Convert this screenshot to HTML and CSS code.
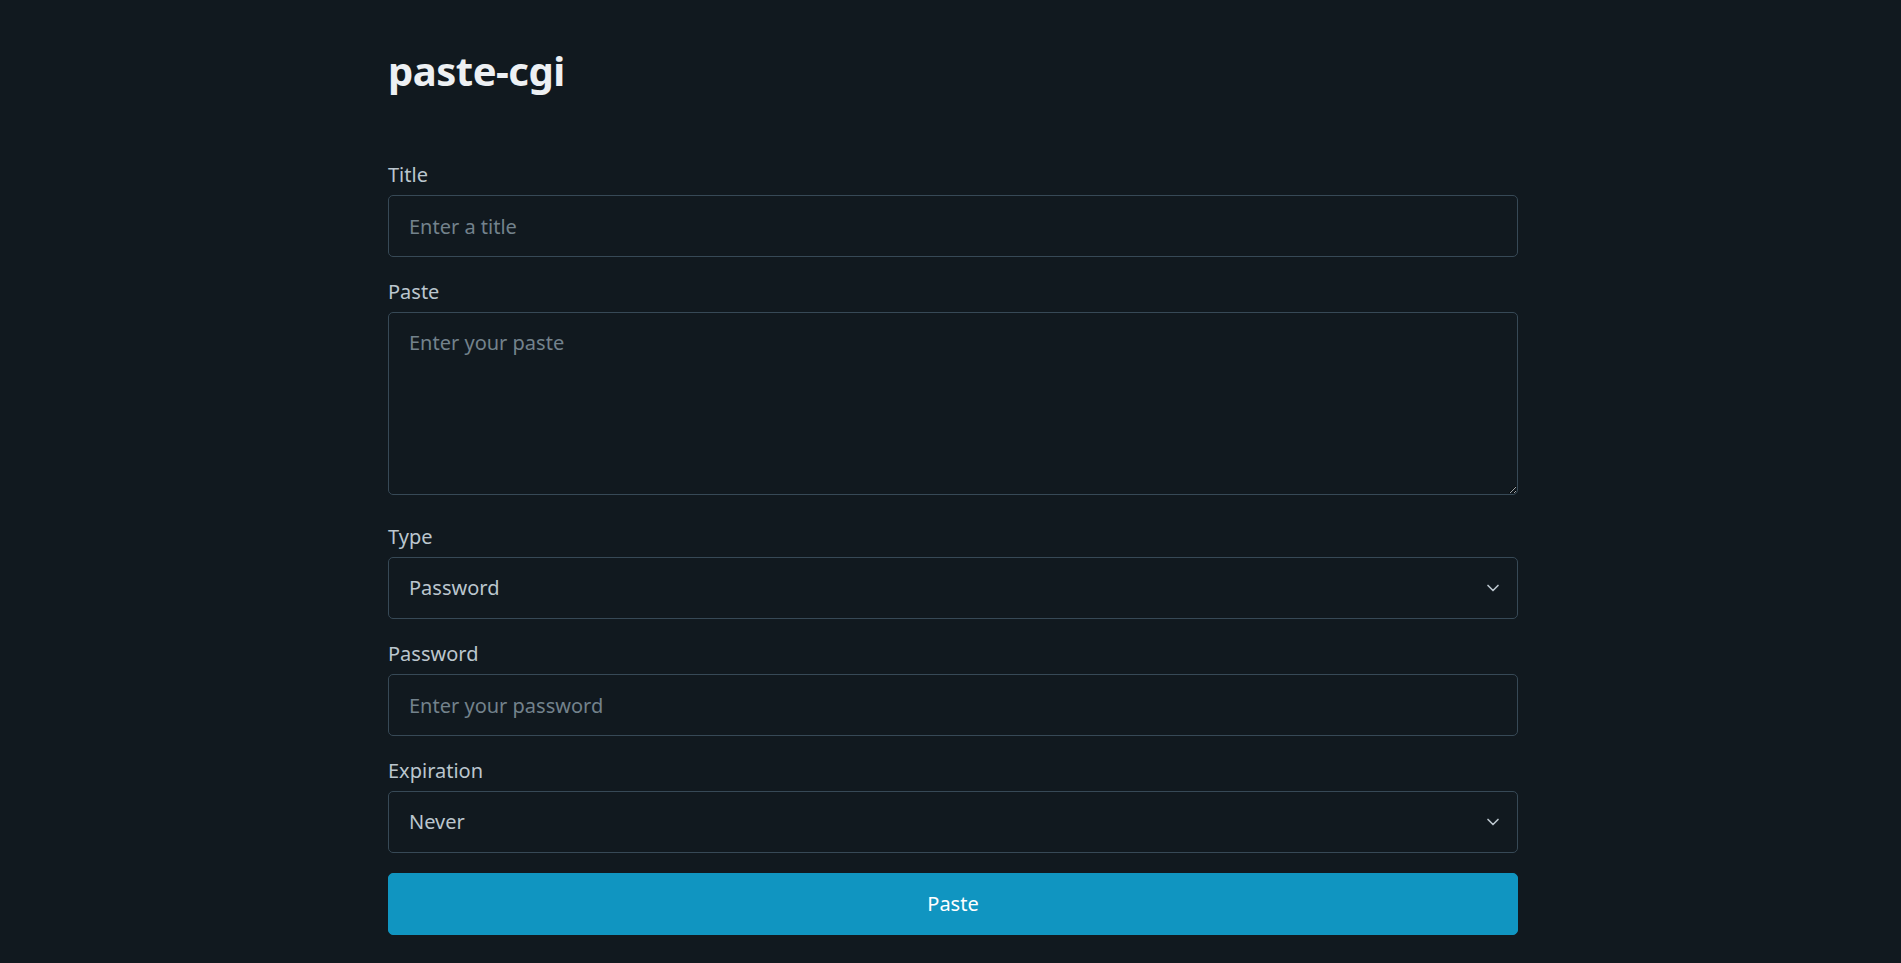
FILE: index.html
```html
<!DOCTYPE html>
<html lang="en">
<head>
<meta charset="utf-8">
<title>paste-cgi</title>
<link rel="stylesheet" href="styles.css">
</head>
<body>
<main class="container">
  <h1 class="site-title">paste-cgi</h1>
  <form class="paste-form">
    <label class="field-label" for="title">Title</label>
    <input class="field" id="title" type="text" placeholder="Enter a title">

    <label class="field-label" for="paste">Paste</label>
    <textarea class="field field-area" id="paste" rows="5" placeholder="Enter your paste"></textarea>

    <label class="field-label" for="type">Type</label>
    <div class="select-wrap">
      <select class="field field-select" id="type">
        <option>Password</option>
      </select>
      <svg class="chevron" viewBox="0 0 24 24" width="20" height="20" aria-hidden="true"><polyline points="6 9 12 15 18 9" fill="none" stroke="#bbc6ce" stroke-width="2" stroke-linecap="round" stroke-linejoin="round"/></svg>
    </div>

    <label class="field-label" for="password">Password</label>
    <input class="field" id="password" type="password" placeholder="Enter your password">

    <label class="field-label" for="exp">Expiration</label>
    <div class="select-wrap">
      <select class="field field-select" id="exp">
        <option>Never</option>
      </select>
      <svg class="chevron" viewBox="0 0 24 24" width="20" height="20" aria-hidden="true"><polyline points="6 9 12 15 18 9" fill="none" stroke="#bbc6ce" stroke-width="2" stroke-linecap="round" stroke-linejoin="round"/></svg>
    </div>

    <button class="submit-btn" type="button">Paste</button>
  </form>
</main>
</body>
</html>
```

FILE: styles.css
```css
* {
  box-sizing: border-box;
}

html {
  font-size: 20px;
}

body {
  margin: 0;
  background: #11191f;
  color: #bbc6ce;
  font-family: "Noto Sans", "Open Sans", sans-serif;
  font-size: 20px;
  line-height: 1.5;
  min-height: 963px;
}

.container {
  width: 1135px;
  margin: 0 auto;
  padding-top: 48px;
  padding-left: 5px;
}

.site-title {
  margin: 0 0 67px 0;
  font-size: 40px;
  line-height: 45px;
  font-weight: 700;
  color: #edf0f3;
  letter-spacing: -0.5px;
}

.paste-form {
  display: flex;
  flex-direction: column;
}

.field-label {
  display: block;
  margin-bottom: 5px;
  color: #bbc6ce;
  font-size: 20px;
  line-height: 30px;
}

.field {
  display: block;
  width: 100%;
  margin: 0 0 20px 0;
  padding: 15px 20px;
  border: 1px solid #374956;
  border-radius: 5px;
  background: #11191f;
  color: #bbc6ce;
  font-family: inherit;
  font-size: 20px;
  line-height: 30px;
  height: 62px;
  outline: none;
}

.field::placeholder {
  color: #73828c;
  opacity: 1;
}

.field-area {
  height: 183px;
  resize: vertical;
  margin-bottom: 27px;
}

.select-wrap {
  position: relative;
}

.field-select {
  appearance: none;
  -webkit-appearance: none;
  padding-right: 50px;
}

.chevron {
  position: absolute;
  right: 15px;
  top: 21px;
  pointer-events: none;
}

.submit-btn {
  display: block;
  width: 100%;
  height: 62px;
  padding: 15px 20px;
  border: 1px solid #1095c1;
  border-radius: 5px;
  background: #1095c1;
  color: #fff;
  font-family: inherit;
  font-size: 20px;
  line-height: 30px;
  cursor: pointer;
}
```
